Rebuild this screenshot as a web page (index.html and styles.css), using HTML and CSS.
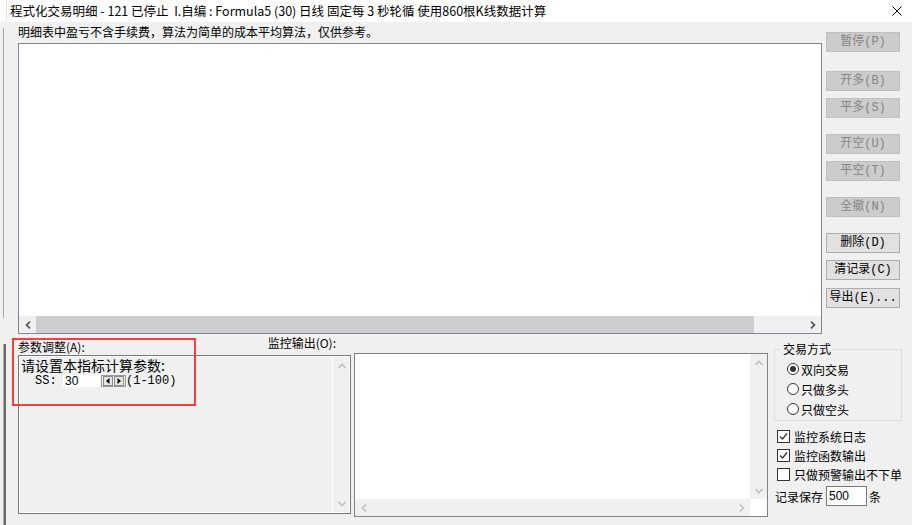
FILE: index.html
```html
<!DOCTYPE html>
<html lang="zh-CN">
<head>
<meta charset="utf-8">
<title>程式化交易明细</title>
<link rel="stylesheet" href="styles.css">
</head>
<body>
<div class="screen">
  <div class="bgwin">
    <div class="bg-top"></div>
    <div class="bg-rule"></div>
    <div class="bg-frag"></div>
    <div class="bg-bars"></div>
  </div>
  <div class="dialog">
    <div class="titlebar">
      <span class="title">程式化交易明细 - 121 已停止&nbsp; I.自编 : Formula5 (30) 日线 固定每 3 秒轮循 使用860根K线数据计算</span>
      <svg class="close" viewBox="0 0 10 10"><path d="M0.5 0.5 L9.5 9.5 M9.5 0.5 L0.5 9.5" stroke="#000" stroke-width="1" fill="none"/></svg>
    </div>
    <div class="client">
      <div class="top">
        <div class="main">
          <div class="note">明细表中盈亏不含手续费，算法为简单的成本平均算法，仅供参考。</div>
          <div class="listbox">
            <div class="listbody"></div>
            <div class="hscroll">
              <div class="sbtn"><svg class="chev-h" viewBox="0 0 6 8"><polyline points="5,0.5 1.5,4 5,7.5" class="dark"/></svg></div>
              <div class="track"><div class="thumb"></div></div>
              <div class="sbtn"><svg class="chev-h" viewBox="0 0 6 8"><polyline points="1,0.5 4.5,4 1,7.5" class="dark"/></svg></div>
            </div>
          </div>
        </div>
        <div class="buttons">
          <div class="btn dis">暂停(P)</div>
          <div class="btn dis g19">开多(B)</div>
          <div class="btn dis g7">平多(S)</div>
          <div class="btn dis g16">开空(U)</div>
          <div class="btn dis g7">平空(T)</div>
          <div class="btn dis g16">全撤(N)</div>
          <div class="btn g16">删除(D)</div>
          <div class="btn g7">清记录(C)</div>
          <div class="btn g8">导出(E)...</div>
        </div>
      </div>
      <div class="bottom">
        <div class="col-param">
          <div class="labels">
            <span class="lbl-param">参数调整(A):</span>
            <span class="lbl-mon">监控输出(O):</span>
          </div>
          <div class="param">
            <div class="param-content">
              <div class="param-head">请设置本指标计算参数:</div>
              <div class="param-row">
                <span class="ss">SS:</span>
                <span class="num-input">30</span>
                <svg class="spin" viewBox="0 0 25 12">
                  <rect x="0.5" y="0.5" width="24" height="11" fill="#f0f0f0" stroke="#9a9a9a"/>
                  <rect x="2.5" y="1.5" width="9" height="9" fill="#e6e6e6" stroke="#8a8a8a"/>
                  <rect x="13.5" y="1.5" width="9" height="9" fill="#e6e6e6" stroke="#8a8a8a"/>
                  <polygon points="8.5,3 8.5,9 5,6" fill="#000"/>
                  <polygon points="16.5,3 16.5,9 20,6" fill="#000"/>
                </svg>
                <span class="range">(1-100)</span>
              </div>
            </div>
            <div class="vscroll">
              <div class="sbtn"><svg class="chev-v" viewBox="0 0 8 6"><polyline points="0.5,5 4,1.5 7.5,5" class="light"/></svg></div>
              <div class="sbtn"><svg class="chev-v" viewBox="0 0 8 6"><polyline points="0.5,1 4,4.5 7.5,1" class="light"/></svg></div>
            </div>
          </div>
        </div>
        <div class="col-mon">
          <div class="monitor">
            <div class="mon-body"></div>
            <div class="mon-v">
              <div class="sbtn"><svg class="chev-v" viewBox="0 0 8 6"><polyline points="0.5,5 4,1.5 7.5,5" class="light"/></svg></div>
              <div class="sbtn"><svg class="chev-v" viewBox="0 0 8 6"><polyline points="0.5,1 4,4.5 7.5,1" class="light"/></svg></div>
            </div>
            <div class="mon-h">
              <div class="sbtn"><svg class="chev-h" viewBox="0 0 6 8"><polyline points="5,0.5 1.5,4 5,7.5" class="light"/></svg></div>
              <div class="sbtn"><svg class="chev-h" viewBox="0 0 6 8"><polyline points="1,0.5 4.5,4 1,7.5" class="light"/></svg></div>
            </div>
            <div class="mon-corner"></div>
          </div>
        </div>
        <div class="col-opts">
          <div class="group">
            <span class="legend">交易方式</span>
            <div class="radios">
              <div class="opt"><span class="radio on"></span>双向交易</div>
              <div class="opt"><span class="radio"></span>只做多头</div>
              <div class="opt"><span class="radio"></span>只做空头</div>
            </div>
          </div>
          <div class="checks">
            <div class="chk-row"><span class="chk"><svg viewBox="0 0 11 11"><polyline points="2,5.5 4.5,8 9,2.5" fill="none" stroke="#333" stroke-width="1.3"/></svg></span>监控系统日志</div>
            <div class="chk-row"><span class="chk"><svg viewBox="0 0 11 11"><polyline points="2,5.5 4.5,8 9,2.5" fill="none" stroke="#333" stroke-width="1.3"/></svg></span>监控函数输出</div>
            <div class="chk-row"><span class="chk"></span>只做预警输出不下单</div>
            <div class="save-row">记录保存<span class="save-input">500</span><span class="unit">条</span></div>
          </div>
        </div>
      </div>
    </div>
  </div>
  <div class="highlight"></div>
</div>
</body>
</html>
```
FILE: styles.css
```css
* { box-sizing: border-box; margin: 0; padding: 0; }
html, body { width: 912px; height: 525px; overflow: hidden; background: #f0f0f0; }
body { font-family: "Noto Sans CJK SC", "Noto Sans", sans-serif; font-size: 12px; color: #000; }

.screen { position: relative; display: flex; width: 912px; height: 525px; }

/* background window strip */
.bgwin { width: 7px; flex: none; display: flex; flex-direction: column; overflow: hidden; background: #f0f0f0; }
.bg-top { height: 22px; background: #fff; border-right: 1px solid #e4e4e4; }
.bg-rule { margin: 6px 0 0 3px; width: 1px; height: 290px; background: #a8a8a8; }
.bg-frag { height: 20px; margin-top: 4px; }
.bg-bars { flex: 1; margin: 2px 0 0 3px; width: 3px; border-left: 1px solid #a8a8a8; border-right: 2px solid #6d6d6d; }

.dialog { width: 905px; flex: none; display: flex; flex-direction: column; }
.titlebar { height: 22px; background: #fff; display: flex; align-items: center; padding-left: 3px; }
.title { flex: 1; font-size: 12.5px; line-height: 16px; white-space: nowrap; }
.close { width: 10px; height: 10px; margin-right: 10px; flex: none; }

.client { flex: 1; display: flex; flex-direction: column; padding-left: 11px; }

.top { display: flex; height: 312px; }
.main { width: 804px; display: flex; flex-direction: column; }
.note { height: 21px; line-height: 19px; white-space: nowrap; }
.listbox { height: 291px; border: 1px solid #828790; background: #fff; display: flex; flex-direction: column; }
.listbody { flex: 1; }
.hscroll { height: 17px; background: #f0f0f0; display: flex; }
.sbtn { width: 17px; height: 17px; flex: none; display: flex; align-items: center; justify-content: center; }
.track { flex: 1; display: flex; }
.thumb { width: 718px; height: 17px; background: #cdcdcd; }
.chev-h { width: 6px; height: 8px; }
.chev-v { width: 8px; height: 6px; }
polyline.dark { fill: none; stroke: #606060; stroke-width: 1.8; }
polyline.light { fill: none; stroke: #c2c2c2; stroke-width: 1.6; }

.buttons { width: 74px; margin-left: 4px; padding-top: 10px; display: flex; flex-direction: column; }
.btn { height: 20px; border: 1px solid #adadad; background: #e1e1e1; font-family: "Liberation Mono", "Noto Sans CJK SC", monospace; font-size: 12px; line-height: 18px; text-align: center; color: #000; white-space: nowrap; }
.btn.dis { border-color: #bfbfbf; background: #cccccc; color: #858585; }
.g19 { margin-top: 19px; }
.g16 { margin-top: 16px; }
.g8 { margin-top: 8px; }
.g7 { margin-top: 7px; }

.bottom { flex: 1; display: flex; }
.col-param { width: 333px; flex: none; display: flex; flex-direction: column; }
.labels { height: 21px; display: flex; justify-content: space-between; padding-right: 15px; }
.lbl-param { line-height: 14px; padding-top: 6px; }
.lbl-mon { line-height: 14px; padding-top: 2px; }
.param { height: 159px; border: 1px solid #7a7a7a; box-shadow: inset 0 0 0 1px #fff; display: flex; }
.param-content { flex: 1; padding: 1px 0 0 2px; }
.param-head { font-size: 14px; line-height: 16px; white-space: nowrap; }
.param-row { display: flex; align-items: center; height: 14px; margin-top: 1px; }
.ss { margin-left: 14px; width: 28px; font-family: "Liberation Mono", monospace; font-size: 12px; line-height: 14px; }
.num-input { width: 37px; height: 12px; background: #fff; font-family: "Liberation Sans", sans-serif; font-size: 12px; line-height: 12px; padding-left: 2px; }
.spin { width: 25px; height: 12px; margin-left: 1px; }
.range { font-family: "Liberation Mono", monospace; font-size: 12px; line-height: 14px; }
.vscroll { width: 17px; margin: 1px 1px 1px 0; background: #f0f0f0; border-left: 1px solid #fff; display: flex; flex-direction: column; justify-content: space-between; }

.col-mon { width: 414px; margin-left: 3px; flex: none; padding-top: 19px; }
.monitor { height: 164px; border: 1px solid #828282; background: #fff; display: grid; grid-template-columns: 1fr 17px; grid-template-rows: 1fr 17px; }
.mon-v { background: #f0f0f0; display: flex; flex-direction: column; justify-content: space-between; }
.mon-h { background: #f0f0f0; display: flex; justify-content: space-between; }
.mon-corner { background: #fff; }

.col-opts { width: 128px; margin-left: 6px; flex: none; display: flex; flex-direction: column; }
.group { margin-top: 15px; border: 1px solid #dcdcdc; display: flex; flex-direction: column; padding-bottom: 1px; }
.legend { align-self: flex-start; margin: -8px 0 0 6px; padding: 0 2px; background: #f0f0f0; line-height: 14px; }
.radios { padding-top: 3px; }
.opt { height: 20px; display: flex; align-items: center; padding-left: 12px; white-space: nowrap; }
.radio { width: 12px; height: 12px; border: 1px solid #333; border-radius: 50%; background: #fff; margin-right: 2px; display: flex; align-items: center; justify-content: center; }
.radio.on::after { content: ""; width: 6px; height: 6px; border-radius: 50%; background: #333; }

.checks { padding-top: 6px; }
.chk-row { height: 19px; display: flex; align-items: center; padding-left: 3px; white-space: nowrap; }
.chk { width: 13px; height: 13px; border: 1px solid #333; background: #fff; margin-right: 4px; display: flex; }
.chk svg { width: 11px; height: 11px; }
.save-row { height: 20px; margin-top: 2px; display: flex; align-items: center; padding-left: 1px; white-space: nowrap; }
.save-input { width: 41px; height: 20px; margin-left: 3px; border: 1px solid #7a7a7a; background: #fff; font-family: "Liberation Sans", sans-serif; font-size: 12px; line-height: 18px; padding-left: 2px; }
.unit { margin-left: 2px; }

.highlight { position: absolute; left: 12px; top: 338px; width: 184px; height: 68px; border: 2px solid #ff3b3b; pointer-events: none; }
```
